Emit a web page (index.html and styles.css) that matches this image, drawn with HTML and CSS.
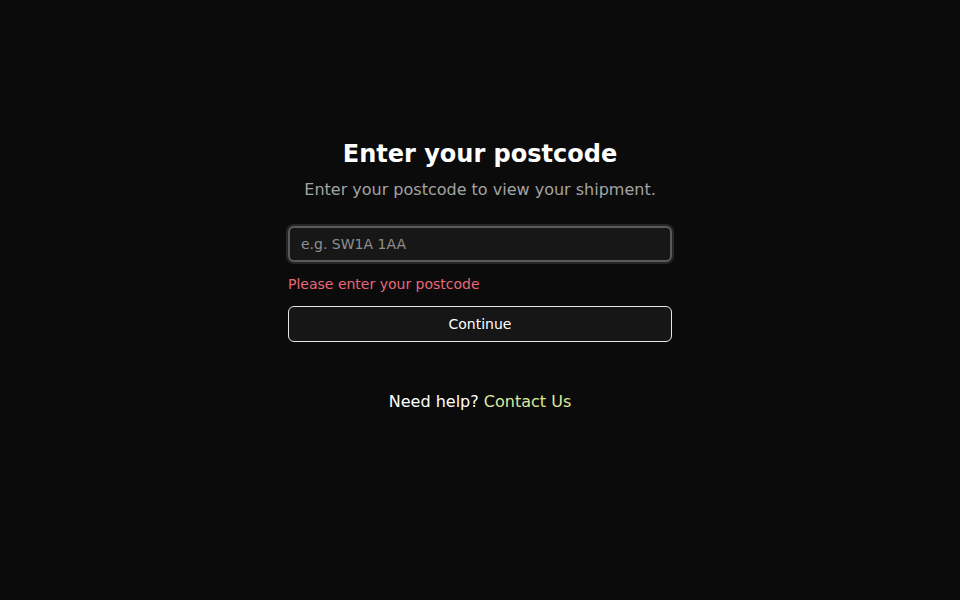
FILE: index.html
```html
<!DOCTYPE html>
<html lang="en">
<head>
<meta charset="utf-8">
<title>Enter your postcode</title>
<link rel="stylesheet" href="styles.css">
</head>
<body>
<main class="page">
  <section class="card">
    <h1 class="title">Enter your postcode</h1>
    <p class="subtitle">Enter your postcode to view your shipment.</p>
    <form class="form">
      <input class="input" type="text" placeholder="e.g. SW1A 1AA">
      <p class="error">Please enter your postcode</p>
      <button class="button" type="button">Continue</button>
    </form>
    <p class="help">Need help? <a class="link" href="#">Contact Us</a></p>
  </section>
</main>
</body>
</html>
```
FILE: styles.css
```css
* { box-sizing: border-box; }
html, body {
  margin: 0;
  height: 100%;
  background: #0b0b0b;
  font-family: "DejaVu Sans", sans-serif;
  color: #ffffff;
}
.page {
  display: flex;
  justify-content: center;
  padding-top: 138px;
}
.card {
  width: 384px;
  display: flex;
  flex-direction: column;
  align-items: stretch;
  text-align: center;
}
.title {
  margin: 0;
  font-size: 24px;
  line-height: 32px;
  font-weight: bold;
  color: #ffffff;
}
.subtitle {
  margin: 8px 0 0;
  font-size: 16px;
  line-height: 24px;
  color: #a3a3a3;
}
.form {
  margin-top: 24px;
  display: flex;
  flex-direction: column;
}
.input {
  height: 36px;
  width: 100%;
  padding: 0 11px;
  border: 2px solid #5a5a5a;
  border-radius: 6px;
  background: #171717;
  color: #ffffff;
  font-family: "DejaVu Sans", sans-serif;
  font-size: 14px;
  box-shadow: 0 0 0 2px #262626;
  outline: none;
}
.input::placeholder { color: #8f8f8f; }
.error {
  margin: 12px 0 0;
  text-align: left;
  font-size: 14px;
  line-height: 20px;
  color: #e8677a;
}
.button {
  margin-top: 12px;
  height: 36px;
  width: 100%;
  border: 1px solid #e6e6e6;
  border-radius: 6px;
  background: #161616;
  color: #ffffff;
  font-family: "DejaVu Sans", sans-serif;
  font-size: 14px;
}
.help {
  margin: 48px 0 0;
  font-size: 16px;
  line-height: 24px;
  color: #ffffff;
}
.link {
  color: #dbe89e;
  text-decoration: none;
}
```
